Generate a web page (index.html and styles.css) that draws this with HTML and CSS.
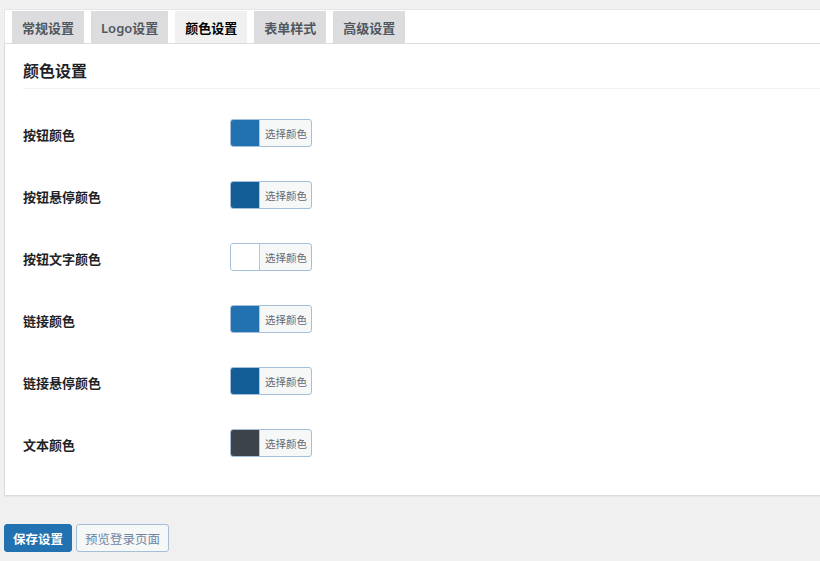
FILE: index.html
```html
<!DOCTYPE html>
<html lang="zh-CN">
<head>
<meta charset="utf-8">
<title>颜色设置</title>
<link rel="stylesheet" href="styles.css">
</head>
<body>
<div class="wrap">
  <div class="tabbar">
    <a class="tab">常规设置</a>
    <a class="tab">Logo设置</a>
    <a class="tab active">颜色设置</a>
    <a class="tab">表单样式</a>
    <a class="tab">高级设置</a>
  </div>
  <div class="panel">
    <h2 class="title">颜色设置</h2>
    <div class="rows">
      <div class="row"><span class="label">按钮颜色</span><span class="picker"><span class="swatch sw-blue"></span><span class="pick-text">选择颜色</span></span></div>
      <div class="row"><span class="label">按钮悬停颜色</span><span class="picker"><span class="swatch sw-dark"></span><span class="pick-text">选择颜色</span></span></div>
      <div class="row"><span class="label">按钮文字颜色</span><span class="picker"><span class="swatch sw-white"></span><span class="pick-text">选择颜色</span></span></div>
      <div class="row"><span class="label">链接颜色</span><span class="picker"><span class="swatch sw-blue"></span><span class="pick-text">选择颜色</span></span></div>
      <div class="row"><span class="label">链接悬停颜色</span><span class="picker"><span class="swatch sw-dark"></span><span class="pick-text">选择颜色</span></span></div>
      <div class="row"><span class="label">文本颜色</span><span class="picker"><span class="swatch sw-text"></span><span class="pick-text">选择颜色</span></span></div>
    </div>
  </div>
</div>
<div class="actions">
  <button class="btn btn-primary">保存设置</button>
  <button class="btn btn-secondary">预览登录页面</button>
</div>
</body>
</html>
```
FILE: styles.css
```css
html, body {
  margin: 0;
  padding: 0;
  background: #f0f0f1;
  overflow: hidden;
  font-family: "Noto Sans", "Noto Sans CJK SC", sans-serif;
  color: #1d2327;
}
.wrap {
  margin: 9px 0 0 4px;
  width: 840px;
}
.tabbar {
  display: flex;
  gap: 7px;
  background: #fff;
  padding: 1px 0 0 7px;
  border-top: 1px solid #e6e6e7;
  border-left: 1px solid #e6e6e7;
  border-bottom: 1px solid #dcdcde;
  height: 32px;
}
.tab {
  display: flex;
  align-items: center;
  padding: 0 10px;
  height: 32px;
  background: #dcdcde;
  color: #50575e;
  font-size: 13px;
  font-weight: 600;
  white-space: nowrap;
  cursor: pointer;
}
.tab.active {
  background: #f0f0f1;
  color: #000;
}
.panel {
  background: #fff;
  border-left: 1px solid #dcdcde;
  border-bottom: 1px solid #dcdcde;
  box-shadow: 0 1px 1px rgba(0,0,0,0.04);
  padding: 16px 0 34px 18px;
  height: 401px;
}
.title {
  margin: 0;
  font-size: 16px;
  font-weight: 600;
  line-height: 22px;
  color: #1d2327;
  padding-bottom: 6px;
  border-bottom: 1px solid #f0f0f1;
}
.rows {
  display: flex;
  flex-direction: column;
  padding-top: 30px;
  gap: 34px;
}
.row {
  display: flex;
  align-items: center;
  height: 28px;
}
.label {
  width: 207px;
  font-size: 13px;
  font-weight: 600;
  color: #1d2327;
  padding-top: 3px;
}
.picker {
  display: flex;
  height: 26px;
  border: 1px solid #a6bfd9;
  border-radius: 3px;
  overflow: hidden;
  background: #f6f7f7;
}
.swatch {
  width: 28px;
  height: 26px;
  border-right: 1px solid #c3c4c7;
}
.sw-blue { background: #2271b1; }
.sw-dark { background: #135e96; }
.sw-white { background: #fff; }
.sw-text { background: #3c434a; }
.pick-text {
  display: flex;
  align-items: center;
  padding: 0 4px 0 5px;
  font-size: 10.5px;
  color: #646970;
  white-space: nowrap;
}
.actions {
  display: flex;
  gap: 4px;
  margin: 28px 0 0 4px;
}
.btn {
  display: flex;
  align-items: center;
  justify-content: center;
  height: 28px;
  padding: 0;
  border-radius: 3px;
  font-family: "Noto Sans", "Noto Sans CJK SC", sans-serif;
  font-size: 12.5px;
  white-space: nowrap;
  cursor: pointer;
}
.btn-primary {
  background: #2271b1;
  border: 1px solid #2271b1;
  color: #fff;
  font-weight: 600;
  width: 68px;
}
.btn-secondary {
  background: #f6f7f7;
  border: 1px solid #a6bfd9;
  color: #6e86a6;
  width: 93px;
}
```
